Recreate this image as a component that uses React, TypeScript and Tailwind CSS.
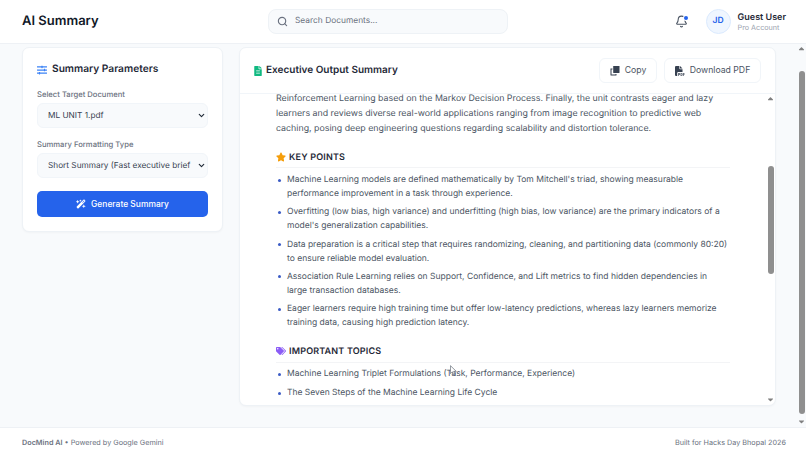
import { Search, Bell, ChevronDown } from "lucide-react";
import { FaFileAlt, FaSlidersH, FaStar, FaTags, FaCaretDown, FaCaretUp } from "react-icons/fa";
import { FaFilePdf, FaWandMagicSparkles } from "react-icons/fa6";

const keyPoints = [
  "Machine Learning models are defined mathematically by Tom Mitchell's triad, showing measurable performance improvement in a task through experience.",
  "Overfitting (low bias, high variance) and underfitting (high bias, low variance) are the primary indicators of a model's generalization capabilities.",
  "Data preparation is a critical step that requires randomizing, cleaning, and partitioning data (commonly 80:20) to ensure reliable model evaluation.",
  "Association Rule Learning relies on Support, Confidence, and Lift metrics to find hidden dependencies in large transaction databases.",
  "Eager learners require high training time but offer low-latency predictions, whereas lazy learners memorize training data, causing high prediction latency.",
];

const topics = [
  "Machine Learning Triplet Formulations (Task, Performance, Experience)",
  "The Seven Steps of the Machine Learning Life Cycle",
];

function Bullets({ items, gap }: { items: string[]; gap: string }) {
  return (
    <ul className={`flex flex-col pr-[2px] ${gap}`}>
      {items.map((item) => (
        <li key={item} className="flex text-[8.5px] leading-[14px] text-[#4b5563]">
          <span className="w-[11px] shrink-0 pt-[5.5px]">
            <span className="block w-[3px] h-[3px] rounded-full bg-[#3b5bc5] ml-[2px]" />
          </span>
          <span>{item}</span>
        </li>
      ))}
    </ul>
  );
}

function Scrollbar({ thumbTop, thumbHeight }: { thumbTop: string; thumbHeight: string }) {
  return (
    <div className="flex flex-col items-center w-[9px] shrink-0 pb-[1px] text-[#808080]">
      <FaCaretUp className="w-[9px] h-[9px] shrink-0" />
      <div className={`w-[6px] rounded-full bg-[#8f8f8f] ${thumbTop} ${thumbHeight}`} />
      <div className="flex-1" />
      <FaCaretDown className="w-[9px] h-[9px] shrink-0" />
    </div>
  );
}

function SelectBox({ label, value }: { label: string; value: string }) {
  return (
    <div>
      <div className="text-[7.65px] leading-[12px] font-medium text-[#6b7280] mb-[1.5px]">{label}</div>
      <div className="h-[25.5px] flex items-center justify-between pl-[10px] pr-[1.5px] rounded-[6px] bg-[#f8fafc] border border-[#f1f5f9] text-[8.25px] text-[#374151]">
        <span className="whitespace-nowrap">{value}</span>
        <ChevronDown className="w-[9px] h-[9px] text-[#1f2937] shrink-0" strokeWidth={3} />
      </div>
    </div>
  );
}

function CopyIcon() {
  return (
    <svg viewBox="0 0 10 10" className="w-[10px] h-[10px] text-[#374151]" fill="currentColor">
      <path d="M3.5 0h3l2.8 0.1 0.2 0.4v6.2l-0.3 0.3H3.5l-0.3-0.3V0.4z" />
      <path d="M0.5 2.5h2v1H1.500v5h4V8h1v1.200l-0.3 0.3H0.8l-0.3-0.3z" />
    </svg>
  );
}

export default function App() {
  return (
    <div className="relative h-[458px] w-[806px] overflow-hidden flex flex-col bg-white font-['Inter',sans-serif] [text-rendering:geometricPrecision]">
      <header className="h-[44px] shrink-0 flex items-center pl-[22px] pr-[20px] bg-white border-b border-[#eef1f5]">
        <h1 className="w-[246px] text-[13px] font-semibold text-[#111827]">AI Summary</h1>
        <div className="w-[240px] h-[25px] flex items-center gap-[7px] px-[8px] rounded-[8px] bg-[#f8fafc] border border-[#eef2f6]">
          <Search className="w-[11px] h-[11px] text-[#6b7280]" strokeWidth={2.5} />
          <span className="text-[8.4px] text-[#6b7280]">Search Documents...</span>
        </div>
        <div className="flex-1" />
        <div className="relative mr-[18px]">
          <Bell className="w-[13px] h-[13px] text-[#4b5563]" />
          <span className="absolute top-[1px] right-[0px] w-[3.5px] h-[3.5px] rounded-full bg-[#2563eb] ring-1 ring-white" />
        </div>
        <div className="w-[25px] h-[25px] shrink-0 rounded-full bg-[#eff6ff] border border-[#dbeafe] flex items-center justify-center text-[8.5px] font-semibold text-[#2563eb] mr-[7px]">
          JD
        </div>
        <div className="whitespace-nowrap">
          <div className="text-[9px] leading-[11px] font-semibold text-[#1f2937]">Guest User</div>
          <div className="text-[7.2px] leading-[9px] text-[#9ca3af]">Pro Account</div>
        </div>
      </header>

      <div className="flex-1 min-h-0 flex bg-[#f8fafc]">
        <main className="flex-1 min-w-0 flex items-start gap-[16px] pl-[22px] pr-[21px] pt-[3px]">
          <section className="w-[201px] shrink-0 h-[185px] bg-white rounded-[7px] border border-[#eef2f6] shadow-[0_1px_2px_rgba(0,0,0,0.03)] px-[14px] pt-[15px] flex flex-col">
            <div className="h-[14px] flex items-center gap-[5px] mb-[12px]">
              <FaSlidersH className="w-[10px] h-[10px] text-[#3b82f6]" />
              <h2 className="text-[10.2px] font-semibold text-[#1f2937]">Summary Parameters</h2>
            </div>
            <div className="flex flex-col gap-[11px]">
              <SelectBox label="Select Target Document" value="ML UNIT 1.pdf" />
              <SelectBox label="Summary Formatting Type" value="Short Summary (Fast executive brief" />
            </div>
            <button className="mt-[13px] h-[25.5px] shrink-0 pt-[1px] rounded-[5px] bg-[#2563eb] text-white text-[8.45px] font-medium flex items-center justify-center gap-[5px]">
              <FaWandMagicSparkles className="w-[10px] h-[10px]" />
              Generate Summary
            </button>
          </section>

          <section className="flex-1 min-w-0 h-[359px] bg-white rounded-[7px] border border-[#eef2f6] shadow-[0_1px_2px_rgba(0,0,0,0.03)] flex flex-col overflow-hidden">
            <div className="h-[46px] shrink-0 flex items-center justify-between pl-[14px] pr-[14px] border-b border-[#f1f5f9]">
              <div className="flex items-center gap-[4px]">
                <FaFileAlt className="w-[8px] h-[10px] text-[#10b981]" />
                <h2 className="text-[10px] font-semibold text-[#1f2937]">Executive Output Summary</h2>
              </div>
              <div className="flex items-center gap-[7px]">
                <button className="h-[25px] w-[58px] flex items-center justify-center gap-[5px] rounded-[6px] border border-[#f1f5f9] text-[8.7px] text-[#4b5563]">
                  <CopyIcon />
                  Copy
                </button>
                <button className="h-[25px] w-[97px] flex items-center justify-center gap-[5px] rounded-[6px] border border-[#f1f5f9] text-[8.7px] text-[#4b5563]">
                  <FaFilePdf className="w-[10px] h-[10px] text-[#374151]" />
                  Download PDF
                </button>
              </div>
            </div>
            <div className="flex-1 min-h-0 flex">
              <div className="flex-1 min-w-0 overflow-hidden pl-[36px] pr-[36px]">
                <p className="-mt-[3px] text-[8.82px] leading-[15px] text-[#4b5563]">
                  Reinforcement Learning based on the Markov Decision Process. Finally, the unit contrasts eager and lazy
                  learners and reviews diverse real-world applications ranging from image recognition to predictive web
                  caching, posing deep engineering questions regarding scalability and distortion tolerance.
                </p>
                <div className="h-[16px] flex items-start gap-[3px] mt-[16px] border-b border-[#f3f4f6]">
                  <FaStar className="w-[10px] h-[10px] text-[#f59e0b]" />
                  <h3 className="text-[9px] leading-[12px] font-semibold tracking-[0.02em] text-[#1f2937]">KEY POINTS</h3>
                </div>
                <div className="mt-[5px]">
                  <Bullets items={keyPoints} gap="gap-[4.25px]" />
                </div>
                <div className="h-[17px] flex items-start gap-[3px] mt-[16px] border-b border-[#f3f4f6]">
                  <FaTags className="w-[10px] h-[10px] text-[#8b5cf6]" />
                  <h3 className="text-[9px] leading-[12px] font-semibold tracking-[0.02em] text-[#1f2937]">IMPORTANT TOPICS</h3>
                </div>
                <div className="mt-[4px]">
                  <Bullets items={topics} gap="gap-[5px]" />
                </div>
              </div>
              <Scrollbar thumbTop="mt-[63px]" thumbHeight="h-[108px]" />
            </div>
          </section>
        </main>
        <Scrollbar thumbTop="mt-[18px]" thumbHeight="h-[343px]" />
      </div>

      <footer className="h-[31px] shrink-0 flex items-center justify-between pl-[22px] pr-[20px] bg-white border-t border-[#eef1f5] text-[7.25px] text-[#6b7280]">
        <div>
          <span className="font-semibold">DocMind AI</span> • Powered by Google Gemini
        </div>
        <div>Built for Hacks Day Bhopal 2026</div>
      </footer>

      {/* mouse pointer caught in the screenshot */}
      <svg viewBox="0 0 8 12" className="absolute left-[450px] top-[365px] w-[7px] h-[11px]">
        <path d="M0.5 0.5v9l2.200-2 1.500 3.500 1.500-0.700-1.500-3.300h3z" fill="#fff" stroke="#4b5563" strokeWidth="0.7" />
      </svg>
    </div>
  );
}
